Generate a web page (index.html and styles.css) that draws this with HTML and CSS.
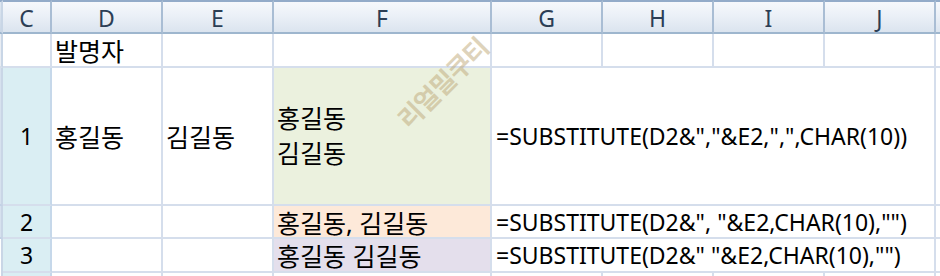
FILE: index.html
```html
<!DOCTYPE html>
<html lang="ko">
<head>
<meta charset="utf-8">
<link rel="stylesheet" href="styles.css">
</head>
<body>
<div class="sheet">
  <div class="strip s-head"></div>
  <div class="hd">C</div>
  <div class="hd">D</div>
  <div class="hd">E</div>
  <div class="hd">F</div>
  <div class="hd">G</div>
  <div class="hd">H</div>
  <div class="hd">I</div>
  <div class="hd">J</div>
  <div class="hd hd-end"></div>

  <div class="strip s-a"></div>
  <div class="c"></div>
  <div class="c ko">발명자</div>
  <div class="c"></div>
  <div class="c"></div>
  <div class="c"></div>
  <div class="c"></div>
  <div class="c"></div>
  <div class="c"></div>
  <div class="c end"></div>

  <div class="strip s-b"></div>
  <div class="c num">1</div>
  <div class="c ko">홍길동</div>
  <div class="c ko">김길동</div>
  <div class="c ko green multi"><span>홍길동</span><span>김길동</span></div>
  <div class="c wide">=SUBSTITUTE(D2&amp;","&amp;E2,",",CHAR(10))</div>
  <div class="c end"></div>

  <div class="strip s-b"></div>
  <div class="c num">2</div>
  <div class="c"></div>
  <div class="c"></div>
  <div class="c ko peach">홍길동, 김길동</div>
  <div class="c wide">=SUBSTITUTE(D2&amp;", "&amp;E2,CHAR(10),"")</div>
  <div class="c end"></div>

  <div class="strip s-w"></div>
  <div class="c num">3</div>
  <div class="c"></div>
  <div class="c"></div>
  <div class="c ko lav">홍길동 김길동</div>
  <div class="c wide">=SUBSTITUTE(D2&amp;" "&amp;E2,CHAR(10),"")</div>
  <div class="c end"></div>

  <div class="strip s-w"></div>
  <div class="c num"></div>
  <div class="c"></div>
  <div class="c"></div>
  <div class="c"></div>
  <div class="c"></div>
  <div class="c"></div>
  <div class="c"></div>
  <div class="c"></div>
  <div class="c end"></div>

  <div class="watermark">리얼밀쿠티</div>
</div>
</body>
</html>
```

FILE: styles.css
```css
html, body {
  margin: 0;
  padding: 0;
  background: #ffffff;
}

.sheet {
  position: relative;
  width: 940px;
  height: 276px;
  overflow: hidden;
  display: grid;
  grid-template-columns: 3px 49px 111px 111px 218px 111px 111px 111px 111px 4px;
  grid-template-rows: 34px 34px 138px 33px 34px 40px;
  font-family: "Noto Sans", "Noto Sans CJK KR", sans-serif;
  font-size: 23px;
  color: #000;
}

.strip {
  border-right: 2px solid #c9d6e6;
  box-sizing: border-box;
}
.s-head {
  background: linear-gradient(#dfe7f1, #c9d6e6);
  border-top: 2px solid #93abc9;
  border-bottom: 2px solid #9eb6ce;
}
.s-a { background: #e9edf3; border-bottom: 2px solid #d5deea; }
.s-b { background: #d6e1ee; border-bottom: 2px solid #c3d2e5; }
.s-w { background: #ffffff; }

.hd {
  box-sizing: border-box;
  display: flex;
  align-items: center;
  justify-content: center;
  background: linear-gradient(#f6f8fc 0%, #ebf0f7 45%, #dbe4ef 100%);
  border-top: 2px solid #93abc9;
  border-bottom: 2px solid #9eb6ce;
  border-right: 2px solid #a9bdd4;
  color: #2c3e55;
  font-size: 23px;
  padding-top: 1px;
}
.hd-end { border-right: none; }

.c {
  box-sizing: border-box;
  display: flex;
  align-items: center;
  padding-left: 4px;
  border-right: 2px solid #d5deec;
  border-bottom: 2px solid #d5deec;
  white-space: nowrap;
  background: #ffffff;
}
.c.end { border-right: none; }

.ko {
  font-size: 25px;
  padding-left: 3px;
}

.num {
  justify-content: center;
  padding-left: 0;
  background: #daeef3;
  border-right-color: #c6d8ea;
}

.green { background: #ebf1de; }
.peach { background: #fde9d9; }
.lav { background: #e4dfec; }

.multi {
  flex-direction: column;
  align-items: flex-start;
  justify-content: center;
  line-height: 35px;
}

.wide {
  grid-column: span 4;
}

.watermark {
  position: absolute;
  left: 382px;
  top: 58px;
  width: 130px;
  transform: rotate(-45deg);
  color: rgba(190, 168, 120, 0.5);
  font-family: "Noto Sans CJK KR", sans-serif;
  font-weight: 700;
  font-size: 26px;
  letter-spacing: -1px;
  white-space: nowrap;
  pointer-events: none;
}
```
